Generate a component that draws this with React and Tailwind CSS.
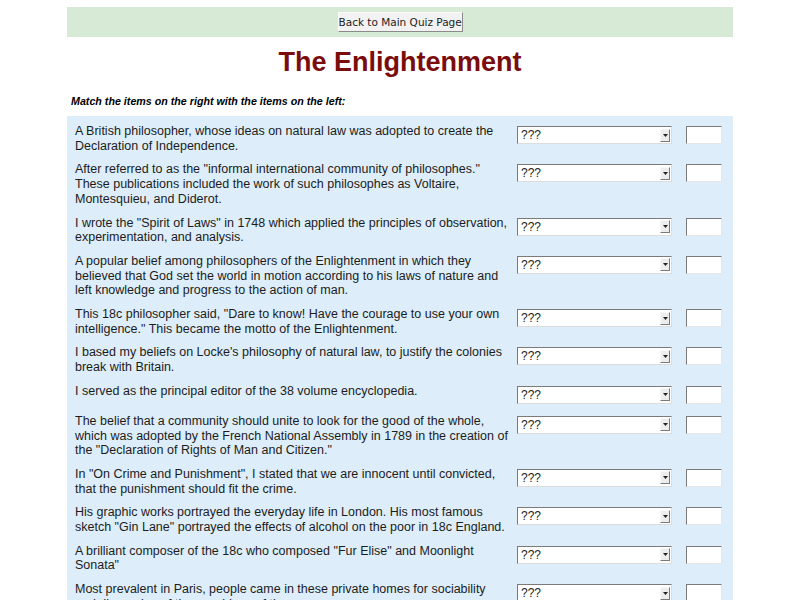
import React from "react";

const items = [
  "A British philosopher, whose ideas on natural law was adopted to create the Declaration of Independence.",
  "After referred to as the \"informal international community of philosophes.\" These publications included the work of such philosophes as Voltaire, Montesquieu, and Diderot.",
  "I wrote the \"Spirit of Laws\" in 1748 which applied the principles of observation, experimentation, and analysis.",
  "A popular belief among philosophers of the Enlightenment in which they believed that God set the world in motion according to his laws of nature and left knowledge and progress to the action of man.",
  "This 18c philosopher said, \"Dare to know! Have the courage to use your own intelligence.\" This became the motto of the Enlightenment.",
  "I based my beliefs on Locke's philosophy of natural law, to justify the colonies break with Britain.",
  "I served as the principal editor of the 38 volume encyclopedia.",
  "The belief that a community should unite to look for the good of the whole, which was adopted by the French National Assembly in 1789 in the creation of the \"Declaration of Rights of Man and Citizen.\"",
  "In \"On Crime and Punishment\", I stated that we are innocent until convicted, that the punishment should fit the crime.",
  "His graphic works portrayed the everyday life in London. His most famous sketch \"Gin Lane\" portrayed the effects of alcohol on the poor in 18c England.",
  "A brilliant composer of the 18c who composed \"Fur Elise\" and Moonlight Sonata\"",
  "Most prevalent in Paris, people came in these private homes for sociability and discussion of the new ideas of the age.",
];

function FakeSelect() {
  return (
    <div className="mt-[2px] flex h-[18px] w-[155px] shrink-0 items-center border border-t-[#7a7a7a] border-l-[#7a7a7a] border-r-[#dcdcdc] border-b-[#dcdcdc] bg-white">
      <span className="flex-1 pl-[3px] text-[12px] leading-none text-[#222]">???</span>
      <span className="mr-[1px] flex h-[13px] w-[10px] items-center justify-center border border-t-[#f8f8f8] border-l-[#f8f8f8] border-r-[#7a7a7a] border-b-[#7a7a7a] bg-[#ededed]">
        <svg width="5" height="3" viewBox="0 0 5 3">
          <path d="M0 0 H5 L2.5 3 Z" fill="#222" />
        </svg>
      </span>
    </div>
  );
}

export default function App() {
  return (
    <div className="min-h-[600px] bg-white" style={{ fontFamily: '"Liberation Sans", Arial, sans-serif' }}>
      <div className="mx-auto w-[666px] pt-[7px]">
        <div className="flex h-[30px] items-center justify-center bg-[#d7ead6]">
          <button
            className="h-[20px] w-[125px] whitespace-nowrap border border-t-[#fafafa] border-l-[#fafafa] border-r-[#8a8a8a] border-b-[#8a8a8a] bg-[#f2f2f2] px-0 text-[10.5px] leading-none text-[#222]"
            style={{ fontFamily: '"DejaVu Sans", sans-serif' }}
          >
            Back to Main Quiz Page
          </button>
        </div>
        <h1 className="mt-[9px] text-center text-[27px] font-bold leading-[32px] text-[#7a0c0c]">
          The Enlightenment
        </h1>
        <p className="mt-[17px] pl-[4px] text-[10.7px] font-bold italic leading-[12px] text-black">
          Match the items on the right with the items on the left:
        </p>
        <div className="mt-[9px] bg-[#ddeefa] pt-[8px]">
          {items.map((t, i) => (
            <div key={i} className="flex items-start pb-[9px] pl-[8px]">
              <div className="w-[433px] text-[12.5px] leading-[14.7px] text-[#1c1c1c]">{t}</div>
              <div className="ml-[9px] min-h-[21px]">
                <FakeSelect />
              </div>
              <div className="ml-[14px] mt-[2px] h-[18px] w-[36px] border border-t-[#7a7a7a] border-l-[#7a7a7a] border-r-[#e6e6e6] border-b-[#e6e6e6] bg-white" />
            </div>
          ))}
        </div>
      </div>
    </div>
  );
}
